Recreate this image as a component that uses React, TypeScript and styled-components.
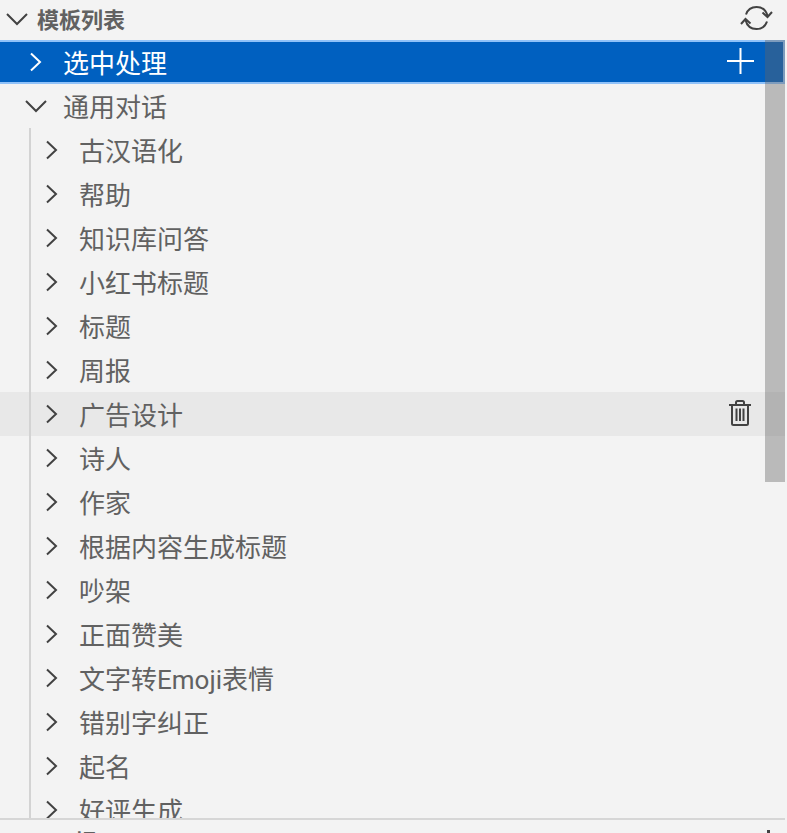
import styled, { createGlobalStyle } from "styled-components"

const GlobalStyle = createGlobalStyle`
  html, body {
    margin: 0;
    padding: 0;
    background: #f3f3f3;
  }
  body {
    font-family: Roboto, "Noto Sans CJK SC", sans-serif;
  }
`

const templates = [
  "古汉语化",
  "帮助",
  "知识库问答",
  "小红书标题",
  "标题",
  "周报",
  "广告设计",
  "诗人",
  "作家",
  "根据内容生成标题",
  "吵架",
  "正面赞美",
  "文字转Emoji表情",
  "错别字纠正",
  "起名",
  "好评生成",
]

const ChevronRight = () => (
  <svg width="32" height="24" viewBox="0 0 32 24" fill="none" stroke="currentColor" strokeWidth="2">
    <path d="M11 3.500L20 12L11 20.500" />
  </svg>
)

const ChevronDown = () => (
  <svg width="32" height="24" viewBox="0 0 32 24" fill="none" stroke="currentColor" strokeWidth="2">
    <path d="M6 7L16 17L26 7" />
  </svg>
)

const RefreshIcon = () => (
  <svg width="33" height="26" viewBox="0 0 33 26" fill="none" stroke="#424242" strokeWidth="2">
    <path d="M6 9.500C7.600 4.800 11.500 2 16.500 2C21.500 2 26 5 27.500 11" />
    <path d="M22.500 7.500L27.500 12L32 7" />
    <path d="M27 16.500C25.400 21.200 21.500 24 16.500 24C11.500 24 7 21 5.500 15" />
    <path d="M10.500 18.500L5.500 14L1 19" />
  </svg>
)

const PlusIcon = () => (
  <svg width="27" height="26" viewBox="0 0 27 26" fill="none" stroke="#ffffff" strokeWidth="2">
    <path d="M13.500 0V26M0 13H27" />
  </svg>
)

const TrashIcon = () => (
  <svg width="22" height="26" viewBox="0 0 22 26" fill="none" stroke="#424242" strokeWidth="2">
    <path d="M0 5H22" />
    <path d="M7 5V2.500Q7 1 8.500 1H13.500Q15 1 15 2.500V5" />
    <path d="M3 5V23.500Q3 25 4.500 25H17.500Q19 25 19 23.500V5" />
    <path d="M7.500 8.500V21M11 8.500V21M14.500 8.500V21" />
  </svg>
)

const App = () => {
  return (
    <>
      <GlobalStyle />
      <Panel>
        <SectionHeader>
          <HeaderChevron>
            <ChevronDown />
          </HeaderChevron>
          <SectionTitle>模板列表</SectionTitle>
          <HeaderAction>
            <RefreshIcon />
          </HeaderAction>
        </SectionHeader>

        <TreeBody>
          <Row $selected>
            <Twistie $depth={0} $light>
              <ChevronRight />
            </Twistie>
            <Label>选中处理</Label>
            <PlusAction>
              <PlusIcon />
            </PlusAction>
          </Row>
          <Row>
            <Twistie $depth={0}>
              <ChevronDown />
            </Twistie>
            <Label>通用对话</Label>
          </Row>
          {templates.map((name) => (
            <Row key={name} $hover={name === "广告设计"}>
              <IndentGuide />
              <Twistie $depth={1}>
                <ChevronRight />
              </Twistie>
              <Label>{name}</Label>
              {name === "广告设计" && (
                <TrashAction>
                  <TrashIcon />
                </TrashAction>
              )}
            </Row>
          ))}
          <ScrollThumb />
        </TreeBody>

        <NextSection>
          <NextTitle>提示</NextTitle>
          <NextAction />
        </NextSection>
      </Panel>
    </>
  )
}

export default App

const Panel = styled.div`
  width: 785px;
  height: 833px;
  background: #f3f3f3;
  display: flex;
  flex-direction: column;
  overflow: hidden;
`

const SectionHeader = styled.div`
  flex: none;
  height: 40px;
  display: flex;
  align-items: center;
  color: #424242;
  padding-right: 12px;
`

const HeaderChevron = styled.span`
  width: 32px;
  margin-left: 1px;
  margin-right: 4px;
  margin-bottom: 2px;
  display: flex;
`

const SectionTitle = styled.span`
  font-size: 22px;
  font-weight: 700;
  color: #616161;
  flex: 1;
  margin-bottom: 5px;
`

const HeaderAction = styled.span`
  display: flex;
  margin-bottom: 4px;
`

const TreeBody = styled.div`
  position: relative;
  flex: none;
  height: 778px;
  overflow: hidden;
`

const Row = styled.div<{ $selected?: boolean; $hover?: boolean }>`
  height: 44px;
  box-sizing: border-box;
  display: flex;
  align-items: center;
  font-size: 26px;
  color: ${(p) => (p.$selected ? "#ffffff" : "#616161")};
  background: ${(p) => (p.$selected ? "#0060c0" : p.$hover ? "#e8e8e8" : "transparent")};
  border: ${(p) => (p.$selected ? "2px solid #90c2f9" : "none")};
  border-left: none;
`

const IndentGuide = styled.span`
  flex: none;
  width: 2px;
  height: 100%;
  margin-left: 29px;
  background: #d3d3d3;
`

const Twistie = styled.span<{ $depth: number; $light?: boolean }>`
  flex: none;
  width: 32px;
  height: 24px;
  margin-left: ${(p) => (p.$depth === 0 ? 20 : 5)}px;
  margin-right: 11px;
  color: ${(p) => (p.$light ? "#ffffff" : "#424242")};
  display: flex;
`

const Label = styled.span`
  flex: 1;
  white-space: nowrap;
  line-height: 40px;
  padding-top: 4px;
`

const PlusAction = styled.span`
  flex: none;
  display: flex;
  margin-right: 29px;
  margin-bottom: 2px;
`

const TrashAction = styled.span`
  flex: none;
  display: flex;
  margin-right: 34px;
  margin-bottom: 3px;
`

const ScrollThumb = styled.div`
  position: absolute;
  top: 0;
  right: 0;
  width: 20px;
  height: 442px;
  background: rgba(100, 100, 100, 0.4);
`

const NextSection = styled.div`
  flex: none;
  height: 40px;
  box-sizing: border-box;
  border-top: 2px solid #d6d6d6;
  display: flex;
  align-items: flex-start;
  padding-left: 75px;
  padding-right: 15px;
`

const NextTitle = styled.span`
  flex: 1;
  font-size: 22px;
  line-height: 28px;
  padding-top: 9px;
  font-weight: 700;
  color: #616161;
`

const NextAction = styled.span`
  width: 3px;
  height: 20px;
  margin-top: 10px;
  background: #424242;
`
